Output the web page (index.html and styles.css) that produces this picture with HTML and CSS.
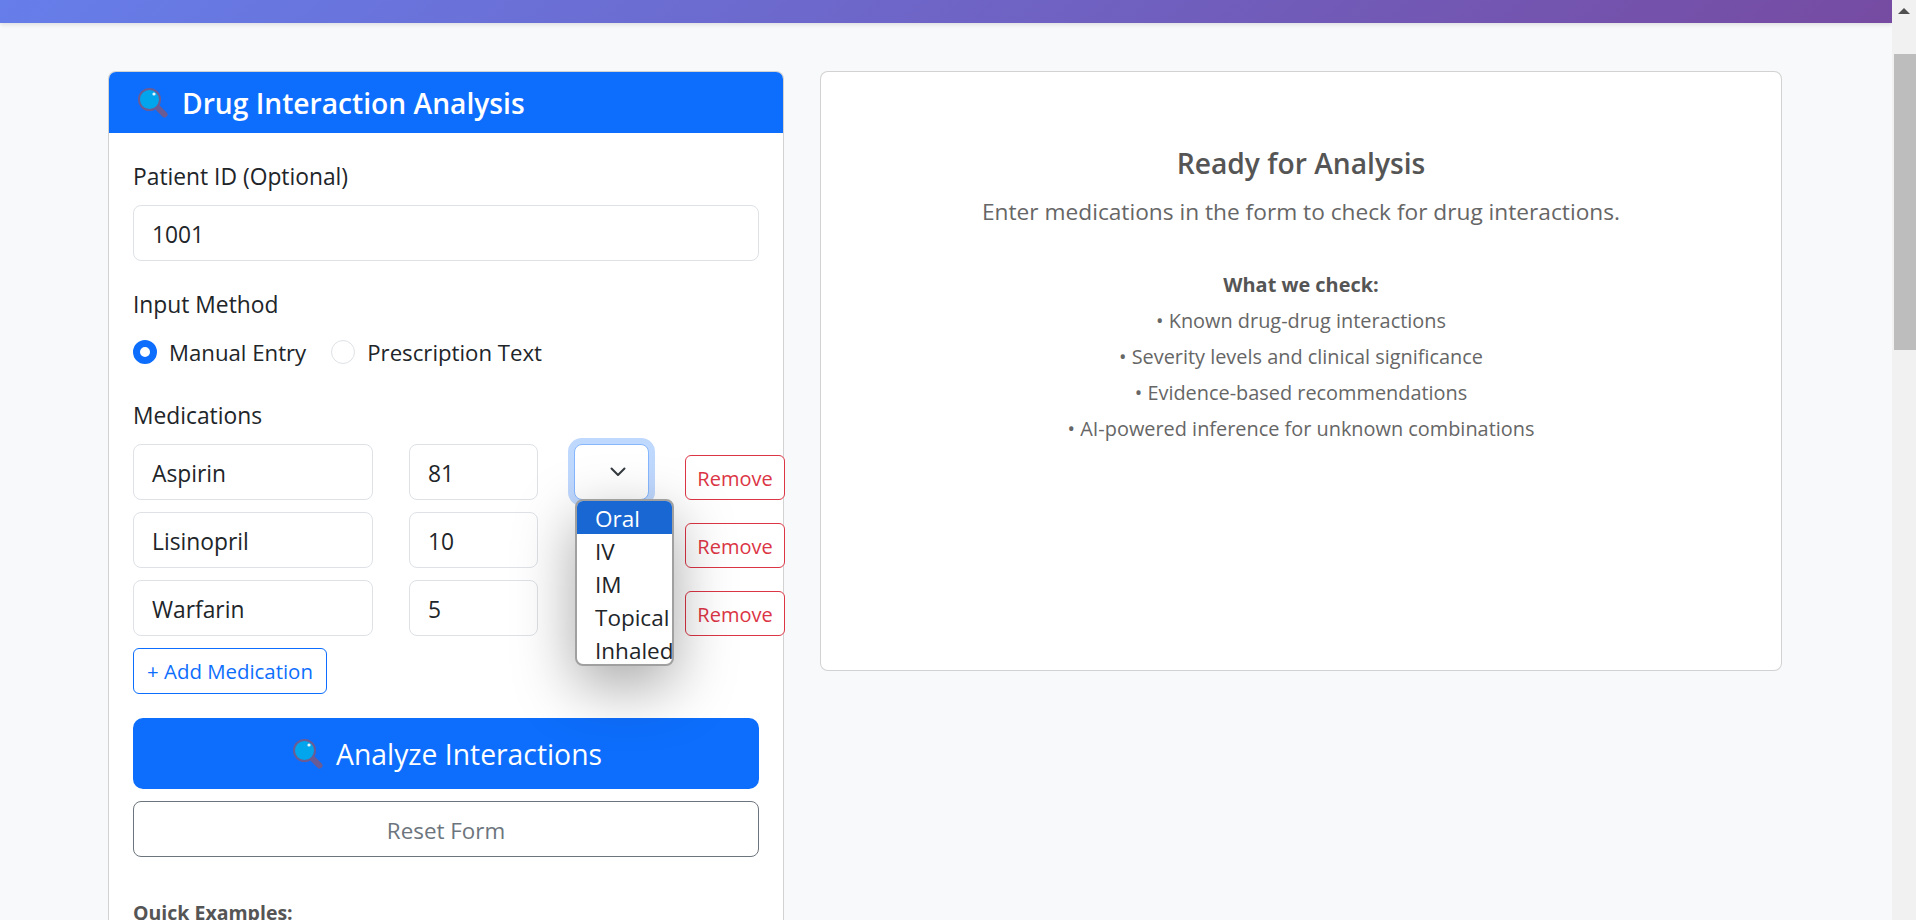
FILE: index.html
```html
<!DOCTYPE html>
<html lang="en">
<head>
<meta charset="utf-8">
<title>Drug Interaction Analysis</title>
<link rel="stylesheet" href="styles.css">
</head>
<body>
<div class="viewport">
  <div class="page">
    <div class="topbar"></div>
    <main class="columns">
      <section class="card form-card">
        <h2 class="card-header">
          <svg class="lens" viewBox="0 0 30 30"><use href="#lens"/></svg>
          <span>Drug Interaction Analysis</span>
        </h2>
        <div class="card-body">
          <label class="label">Patient ID (Optional)</label>
          <div class="input wide">1001</div>
          <div class="label method-label">Input Method</div>
          <div class="radios">
            <span class="radio on"></span><span class="radio-text">Manual Entry</span>
            <span class="radio"></span><span class="radio-text">Prescription Text</span>
          </div>
          <div class="label meds-label">Medications</div>
          <div class="med-row">
            <div class="input name">Aspirin</div>
            <div class="input dose">81</div>
            <div class="select focused"><svg class="chev" viewBox="0 0 16 16"><path d="M1.5 4.5l6.5 6.5 6.5-6.5"/></svg>
              <ul class="dropdown">
                <li class="sel">Oral</li><li>IV</li><li>IM</li><li>Topical</li><li>Inhaled</li>
              </ul>
            </div>
            <button class="remove">Remove</button>
          </div>
          <div class="med-row">
            <div class="input name">Lisinopril</div>
            <div class="input dose">10</div>
            <div class="select"></div>
            <button class="remove">Remove</button>
          </div>
          <div class="med-row">
            <div class="input name">Warfarin</div>
            <div class="input dose">5</div>
            <div class="select"></div>
            <button class="remove">Remove</button>
          </div>
          <button class="add">+ Add Medication</button>
          <button class="analyze">
            <svg class="lens" viewBox="0 0 30 30"><use href="#lens"/></svg>
            <span>Analyze Interactions</span>
          </button>
          <button class="reset">Reset Form</button>
          <div class="examples-title">Quick Examples:</div>
        </div>
      </section>
      <section class="card ready-card">
        <h4 class="ready-title">Ready for Analysis</h4>
        <p class="ready-lead">Enter medications in the form to check for drug interactions.</p>
        <div class="checks">
          <strong>What we check:</strong>
          <div>• Known drug-drug interactions</div>
          <div>• Severity levels and clinical significance</div>
          <div>• Evidence-based recommendations</div>
          <div>• AI-powered inference for unknown combinations</div>
        </div>
      </section>
    </main>
  </div>
  <aside class="scrollbar">
    <div class="arrow"></div>
    <div class="thumb"></div>
  </aside>
</div>
<svg class="defs" width="0" height="0">
  <defs>
    <g id="lens">
      <path d="M19.5 19.5l7 7" stroke="#6b5b95" stroke-width="6" stroke-linecap="round"/>
      <circle cx="11.5" cy="11.5" r="10.5" fill="#00a5ee" stroke="#6b5b95" stroke-width="2"/>
      <circle cx="16" cy="6" r="1.6" fill="#e6f7ff"/>
    </g>
  </defs>
</svg>
</body>
</html>
```
FILE: styles.css
```css
* { box-sizing: border-box; }
html, body { margin: 0; height: 100%; overflow: hidden; }
body { font-family: "Open Sans", "Noto Sans", sans-serif; color: #212529; background: #f8f9fa; font-size: 22.8px; }
.defs { position: absolute; }
.viewport { display: flex; height: 920px; }
.page { flex: 1; min-width: 0; overflow: hidden; }
.topbar { height: 23px; background: linear-gradient(135deg, #667eea, #764ba2); box-shadow: 0 2px 4px rgba(0,0,0,.1); }
.columns { display: grid; grid-template-columns: 676px 962px; column-gap: 36px; padding: 48px 0 0 108px; align-items: start; }
.card { background: #fff; border: 1px solid rgba(0,0,0,.175); border-radius: 8px; }
.form-card { height: 1400px; }
.card-header { display: flex; align-items: center; gap: 14px; margin: 0; height: 61px; background: #0d6efd; color: #fff; font-size: 28.2px; font-weight: 600; padding: 0 29px; border-radius: 7px 7px 0 0; }
.lens { width: 30px; height: 30px; flex: none; }
.card-body { padding: 26px 24px 0; }
.label { display: block; line-height: 36px; margin-bottom: 10px; }
.input { flex: none; border: 1px solid #dee2e6; border-radius: 8px; height: 56px; line-height: 54px; padding: 2px 18px 0; background: #fff; }
.wide { width: 100%; }
.method-label { margin-top: 26px; margin-bottom: 11px; }
.radios { display: flex; align-items: center; height: 36px; font-size: 22.2px; }
.radio { width: 24px; height: 24px; border-radius: 50%; border: 1px solid #dee2e6; background: #fff; flex: none; }
.radio.on { border: 7px solid #0d6efd; }
.radio-text { margin: 0 25px 0 12px; }
.meds-label { margin-top: 28px; margin-bottom: 10px; }
.med-row { display: flex; align-items: flex-end; height: 56px; margin-bottom: 12px; }
.name { width: 240px; margin-right: 36px; }
.dose { width: 129px; margin-right: 36px; }
.select { width: 75px; height: 56px; flex: none; margin-right: 36px; border-radius: 8px; position: relative; }
.select.focused { border: 1px solid #86b7fe; box-shadow: 0 0 0 6px #bfd8fe; background: #fff; }
.chev { position: absolute; left: 35px; top: 19px; width: 16px; height: 16px; fill: none; stroke: #343a40; stroke-width: 2; stroke-linecap: round; stroke-linejoin: round; }
.dropdown { list-style: none; margin: 0; padding: 0; position: absolute; z-index: 5; left: 0; top: 54px; width: 99px; height: 167px; overflow: hidden; background: #fff; border: 2px solid #a0a0a0; border-radius: 8px; font-size: 22.5px; line-height: 35px; box-shadow: 0 20px 60px rgba(0,0,0,.35); }
.dropdown li { padding-left: 18px; height: 33px; white-space: nowrap; }
.dropdown .sel { background: #1967d2; color: #fff; }
.remove { height: 45px; width: 100px; flex: none; border: 1px solid #dc3545; border-radius: 6px; background: #fff; color: #dc3545; font: inherit; font-size: 20px; padding: 2px 0 0; }
.add { display: block; height: 46px; width: 194px; border: 1px solid #0d6efd; border-radius: 6px; background: #fff; color: #0d6efd; font: inherit; font-size: 20.4px; padding: 0; }
.analyze { display: flex; align-items: center; justify-content: center; gap: 13px; width: 100%; height: 71px; margin-top: 24px; padding: 0 0 0 3px; border: 0; border-radius: 10px; background: #0d6efd; color: #fff; font: inherit; font-size: 28.3px; }
.reset { display: block; width: 100%; height: 56px; margin-top: 12px; border: 1px solid #6c757d; border-radius: 8px; background: #fff; color: #6c757d; font: inherit; font-size: 22.4px; padding: 2px 0 0; }
.examples-title { margin-top: 42px; font-weight: 700; font-size: 19.5px; line-height: 27px; color: #555; }
.ready-card { height: 600px; padding-top: 73px; text-align: center; color: #666; }
.ready-title { margin: 0; font-size: 28.2px; line-height: 36px; font-weight: 600; color: #555; }
.ready-lead { margin: 13px 0 0; line-height: 36px; font-size: 22.7px; }
.checks { margin-top: 37px; font-size: 19.9px; line-height: 36px; }
.checks strong { display: block; color: #555; }
.scrollbar { width: 24px; flex: none; background: #f1f1f1; display: flex; flex-direction: column; align-items: flex-end; }
.arrow { width: 0; height: 0; margin: 8px 6px 0 0; border: 6px solid transparent; border-top: 0; border-bottom: 6px solid #505050; }
.thumb { width: 22px; height: 296px; margin-top: 40px; background: #bdbdbd; }
```
